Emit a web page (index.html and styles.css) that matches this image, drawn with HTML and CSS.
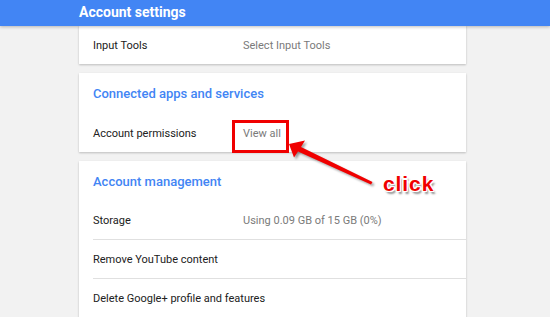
FILE: index.html
```html
<!DOCTYPE html>
<html lang="en">
<head>
  <meta charset="UTF-8" />
  <title>Account settings</title>
  <link rel="stylesheet" href="styles.css">
</head>
<body>
  <div class="page">
    <header class="topbar">
      <div class="topbar-inner">Account settings</div>
    </header>

    <main class="content">
      <section class="card card-cut">
        <div class="row">
          <span class="label">Input Tools</span>
          <span class="value">Select Input Tools</span>
        </div>
      </section>

      <section class="card">
        <h2 class="card-title">Connected apps and services</h2>
        <div class="row">
          <span class="label">Account permissions</span>
          <span class="value">View all</span>
        </div>
      </section>

      <section class="card">
        <h2 class="card-title">Account management</h2>
        <div class="row divided">
          <span class="label">Storage</span>
          <span class="value">Using 0.09 GB of 15 GB (0%)</span>
        </div>
        <div class="row divided">
          <span class="label">Remove YouTube content</span>
        </div>
        <div class="row divided">
          <span class="label">Delete Google+ profile and features</span>
        </div>
      </section>
    </main>

    <!-- annotation over the screenshot -->
    <div class="mark"></div>
    <svg class="arrow" width="550" height="317" viewBox="0 0 550 317">
      <polygon points="289,144 305,140.5 301,147 372.5,182 371,184.5 298,151.5 294,157.5" fill="#f00000"/>
    </svg>
    <div class="click">click</div>
  </div>
</body>
</html>
```

FILE: styles.css
```css
:root {
  --blue: #4285f4;
  --bg: #f2f2f2;
  --text: #212121;
  --muted: #7a7a7a;
  --line: #e0e0e0;
}
* { box-sizing: border-box; margin:0; padding:0 }
html, body {
  height:100%; background:var(--bg);
  font-family:Roboto, "Noto Sans", sans-serif; color:var(--text);
}
.page { position:relative; width:550px; height:317px; overflow:hidden }

.topbar {
  height:26px; background:var(--blue);
  box-shadow:0 1px 3px rgba(0,0,0,0.25);
  position:relative; z-index:1;
}
.topbar-inner {
  padding-left:79px; line-height:24px;
  color:#fff; font-size:14px; font-weight:700;
}

.content {
  width:387px; margin-left:79px;
  display:flex; flex-direction:column; gap:9px;
}
.card {
  background:#fff; padding-left:14px;
  box-shadow:0 1px 2px rgba(0,0,0,0.22);
}
.card-cut { margin-top:-1px }
.card-title {
  height:40px; line-height:41px;
  font-size:13px; font-weight:500; color:var(--blue);
}
.row {
  display:flex; align-items:center; height:39px;
  padding-top:1px; font-size:11px;
}
.row.divided { border-bottom:1px solid var(--line) }
.label { min-width:150px; flex:none }
.value { color:var(--muted) }

.mark {
  position:absolute; left:232px; top:120px; width:57px; height:33px;
  border:3px solid #f00000;
}
.arrow {
  position:absolute; left:0; top:0;
  filter:drop-shadow(2px 2px 1px rgba(0,0,0,0.35));
}
.click {
  position:absolute; left:383px; top:172px;
  font-family:"Liberation Sans", Arial, sans-serif;
  font-size:21px; font-weight:700; letter-spacing:0.9px;
  color:#f00000;
  text-shadow:
    1px 0 0 #fff, -1px 0 0 #fff, 0 1px 0 #fff, 0 -1px 0 #fff,
    1px 1px 0 #fff, -1px -1px 0 #fff, 1px -1px 0 #fff, -1px 1px 0 #fff,
    2px 3px 2px rgba(0,0,0,0.45);
}
```
